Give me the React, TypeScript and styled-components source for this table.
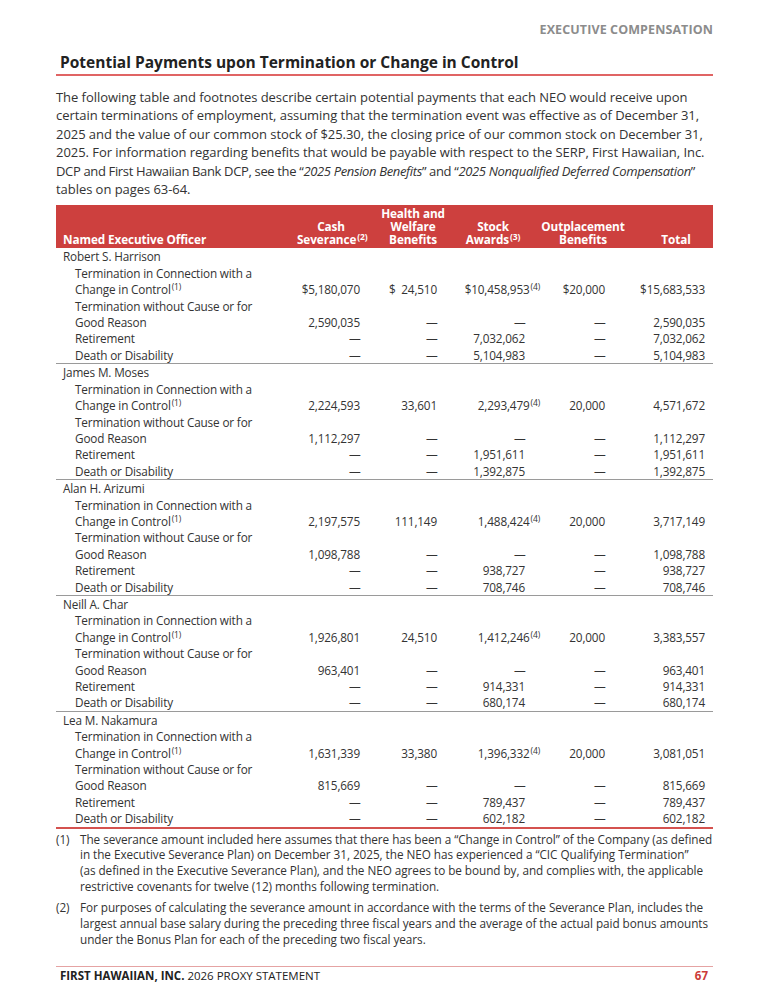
import React from "react";
import styled, { createGlobalStyle } from "styled-components";

const Global = createGlobalStyle`
  html, body { margin: 0; padding: 0; background: #ffffff; }
  body { font-family: "Open Sans", "Liberation Sans", sans-serif; color: #333333; }
  * { box-sizing: border-box; }
`;

const Page = styled.div`
  width: 768px;
  height: 1000px;
  padding: 0 55px 0 56px;
  display: flex;
  flex-direction: column;
`;

const RunningHead = styled.div`
  padding-top: 22px;
  text-align: right;
  font-weight: 700;
  font-size: 12.5px;
  line-height: 16px;
  color: #8c8c8c;
  letter-spacing: 0.1px;
`;

const Title = styled.h1`
  margin: 14px 0 0 0;
  padding: 0 0 2px 4px;
  font-size: 15.5px;
  line-height: 20px;
  font-weight: 700;
  color: #222222;
  border-bottom: 2px solid #e06464;
`;

const Intro = styled.div`
  margin: 12px 0 0 0;
  font-size: 13px;
  line-height: 18.4px;
  letter-spacing: -0.05px;
  color: #333333;
`;

const Line = styled.div<{ $tight?: boolean }>`
  white-space: nowrap;
  letter-spacing: ${(p) => (p.$tight ? "-0.35px" : "inherit")};
`;

const Table = styled.table`
  margin-top: 7px;
  width: 657px;
  border-collapse: collapse;
  table-layout: fixed;
  font-size: 11.75px;
  letter-spacing: -0.15px;
  color: #333333;
`;

const HeadRow = styled.tr`
  background: #cd403e;
`;

const HeadCell = styled.th<{ $align?: "left" | "center" }>`
  vertical-align: bottom;
  text-align: ${(p) => p.$align ?? "center"};
  color: #ffffff;
  font-weight: 700;
  font-size: 11.75px;
  letter-spacing: -0.1px;
  line-height: 13px;
  padding: 2px 2px 2px ${(p) => (p.$align === "left" ? "7px" : "2px")};
  white-space: nowrap;
`;

const Row = styled.tr<{ $rule?: "gray" | "red" }>`
  border-bottom: ${(p) =>
    p.$rule === "gray" ? "1px solid #9a9a9a" : p.$rule === "red" ? "2px solid #d4524f" : "none"};
`;

const LabelCell = styled.td<{ $indent?: boolean }>`
  padding: 0 0 0 ${(p) => (p.$indent ? "19px" : "7px")};
  line-height: 16.4px;
  vertical-align: bottom;
  white-space: nowrap;
`;

const NumCell = styled.td<{ $gap: number }>`
  padding: 0 ${(p) => p.$gap}px 0 0;
  text-align: right;
  line-height: 16.4px;
  vertical-align: bottom;
  white-space: pre;
`;

const Dash = styled.span`
  display: inline-block;
  width: 11px;
  text-align: center;
  letter-spacing: 0;
`;

const Sup = styled.sup<{ $hang?: boolean }>`
  font-size: 8.5px;
  line-height: 0;
  vertical-align: 4px;
  margin-left: 1px;
  margin-right: ${(p) => (p.$hang ? "-15px" : "0")};
`;

const Notes = styled.div`
  margin-top: 3px;
  display: flex;
  flex-direction: column;
  gap: 6px;
`;

const Note = styled.div`
  display: grid;
  grid-template-columns: 24px 1fr;
  font-size: 11.75px;
  letter-spacing: -0.05px;
  line-height: 15.7px;
  color: #333333;
`;

const NoteLines = styled.div`
  white-space: nowrap;
`;

const Footer = styled.div`
  margin-top: auto;
  margin-bottom: 17px;
  border-top: 1.5px solid #e5a3a3;
  padding: 1px 5px 0 4px;
  display: flex;
  justify-content: space-between;
  font-size: 11.5px;
  line-height: 15px;
  color: #222222;
`;

const Brand = styled.span`
  font-weight: 700;
`;

const PageNum = styled.span`
  font-weight: 700;
  color: #cc3a38;
`;

const cols = [239, 72, 92, 68, 112, 74];
const gaps = [7, 22, 2, 34, 8];

type Vals = [string, string, string, string, string];

interface Person {
  name: string;
  cic: Vals;
  nocause: Vals;
  retire: Vals;
  death: Vals;
}

const D = "-";

const people: Person[] = [
  {
    name: "Robert S. Harrison",
    cic: ["$5,180,070", "$  24,510", "$10,458,953", "$20,000", "$15,683,533"],
    nocause: ["2,590,035", D, D, D, "2,590,035"],
    retire: [D, D, "7,032,062", D, "7,032,062"],
    death: [D, D, "5,104,983", D, "5,104,983"],
  },
  {
    name: "James M. Moses",
    cic: ["2,224,593", "33,601", "2,293,479", "20,000", "4,571,672"],
    nocause: ["1,112,297", D, D, D, "1,112,297"],
    retire: [D, D, "1,951,611", D, "1,951,611"],
    death: [D, D, "1,392,875", D, "1,392,875"],
  },
  {
    name: "Alan H. Arizumi",
    cic: ["2,197,575", "111,149", "1,488,424", "20,000", "3,717,149"],
    nocause: ["1,098,788", D, D, D, "1,098,788"],
    retire: [D, D, "938,727", D, "938,727"],
    death: [D, D, "708,746", D, "708,746"],
  },
  {
    name: "Neill A. Char",
    cic: ["1,926,801", "24,510", "1,412,246", "20,000", "3,383,557"],
    nocause: ["963,401", D, D, D, "963,401"],
    retire: [D, D, "914,331", D, "914,331"],
    death: [D, D, "680,174", D, "680,174"],
  },
  {
    name: "Lea M. Nakamura",
    cic: ["1,631,339", "33,380", "1,396,332", "20,000", "3,081,051"],
    nocause: ["815,669", D, D, D, "815,669"],
    retire: [D, D, "789,437", D, "789,437"],
    death: [D, D, "602,182", D, "602,182"],
  },
];

function Nums({ vals, stockNote }: { vals: Vals; stockNote?: boolean }) {
  return (
    <>
      {vals.map((v, i) => (
        <NumCell key={i} $gap={gaps[i]}>
          {v === D ? <Dash>{"\u2014"}</Dash> : v}
          {stockNote && i === 2 ? <Sup $hang>(4)</Sup> : null}
        </NumCell>
      ))}
    </>
  );
}

function PersonRows({ p, last }: { p: Person; last: boolean }) {
  return (
    <>
      <Row>
        <LabelCell colSpan={6}>{p.name}</LabelCell>
      </Row>
      <Row>
        <LabelCell $indent>
          Termination in Connection with a
          <br />
          Change in Control<Sup>(1)</Sup>
        </LabelCell>
        <Nums vals={p.cic} stockNote />
      </Row>
      <Row>
        <LabelCell $indent>
          Termination without Cause or for
          <br />
          Good Reason
        </LabelCell>
        <Nums vals={p.nocause} />
      </Row>
      <Row>
        <LabelCell $indent>Retirement</LabelCell>
        <Nums vals={p.retire} />
      </Row>
      <Row $rule={last ? "red" : "gray"}>
        <LabelCell $indent>Death or Disability</LabelCell>
        <Nums vals={p.death} />
      </Row>
    </>
  );
}

export default function App() {
  return (
    <>
      <Global />
      <Page>
        <RunningHead>EXECUTIVE COMPENSATION</RunningHead>
        <Title>Potential Payments upon Termination or Change in Control</Title>
        <Intro>
          <Line>The following table and footnotes describe certain potential payments that each NEO would receive upon</Line>
          <Line>certain terminations of employment, assuming that the termination event was effective as of December 31,</Line>
          <Line>2025 and the value of our common stock of $25.30, the closing price of our common stock on December 31,</Line>
          <Line>2025. For information regarding benefits that would be payable with respect to the SERP, First Hawaiian, Inc.</Line>
          <Line $tight>
            DCP and First Hawaiian Bank DCP, see the “<i>2025 Pension Benefits</i>” and “
            <i>2025 Nonqualified Deferred Compensation</i>”
          </Line>
          <Line>tables on pages 63-64.</Line>
        </Intro>
        <Table>
          <colgroup>
            {cols.map((w, i) => (
              <col key={i} style={{ width: w }} />
            ))}
          </colgroup>
          <thead>
            <HeadRow>
              <HeadCell $align="left">Named Executive Officer</HeadCell>
              <HeadCell>
                Cash
                <br />
                Severance<Sup>(2)</Sup>
              </HeadCell>
              <HeadCell>
                Health and
                <br />
                Welfare
                <br />
                Benefits
              </HeadCell>
              <HeadCell>
                Stock
                <br />
                Awards<Sup>(3)</Sup>
              </HeadCell>
              <HeadCell>
                Outplacement
                <br />
                Benefits
              </HeadCell>
              <HeadCell>Total</HeadCell>
            </HeadRow>
          </thead>
          <tbody>
            {people.map((p, i) => (
              <PersonRows key={p.name} p={p} last={i === people.length - 1} />
            ))}
          </tbody>
        </Table>
        <Notes>
          <Note>
            <span>(1)</span>
            <NoteLines>
              The severance amount included here assumes that there has been a “Change in Control” of the Company (as defined
              <br />
              in the Executive Severance Plan) on December 31, 2025, the NEO has experienced a “CIC Qualifying Termination”
              <br />
              (as defined in the Executive Severance Plan), and the NEO agrees to be bound by, and complies with, the applicable
              <br />
              restrictive covenants for twelve (12) months following termination.
            </NoteLines>
          </Note>
          <Note>
            <span>(2)</span>
            <NoteLines>
              For purposes of calculating the severance amount in accordance with the terms of the Severance Plan, includes the
              <br />
              largest annual base salary during the preceding three fiscal years and the average of the actual paid bonus amounts
              <br />
              under the Bonus Plan for each of the preceding two fiscal years.
            </NoteLines>
          </Note>
        </Notes>
        <Footer>
          <span>
            <Brand>FIRST HAWAIIAN, INC.</Brand> 2026 PROXY STATEMENT
          </span>
          <PageNum>67</PageNum>
        </Footer>
      </Page>
    </>
  );
}
